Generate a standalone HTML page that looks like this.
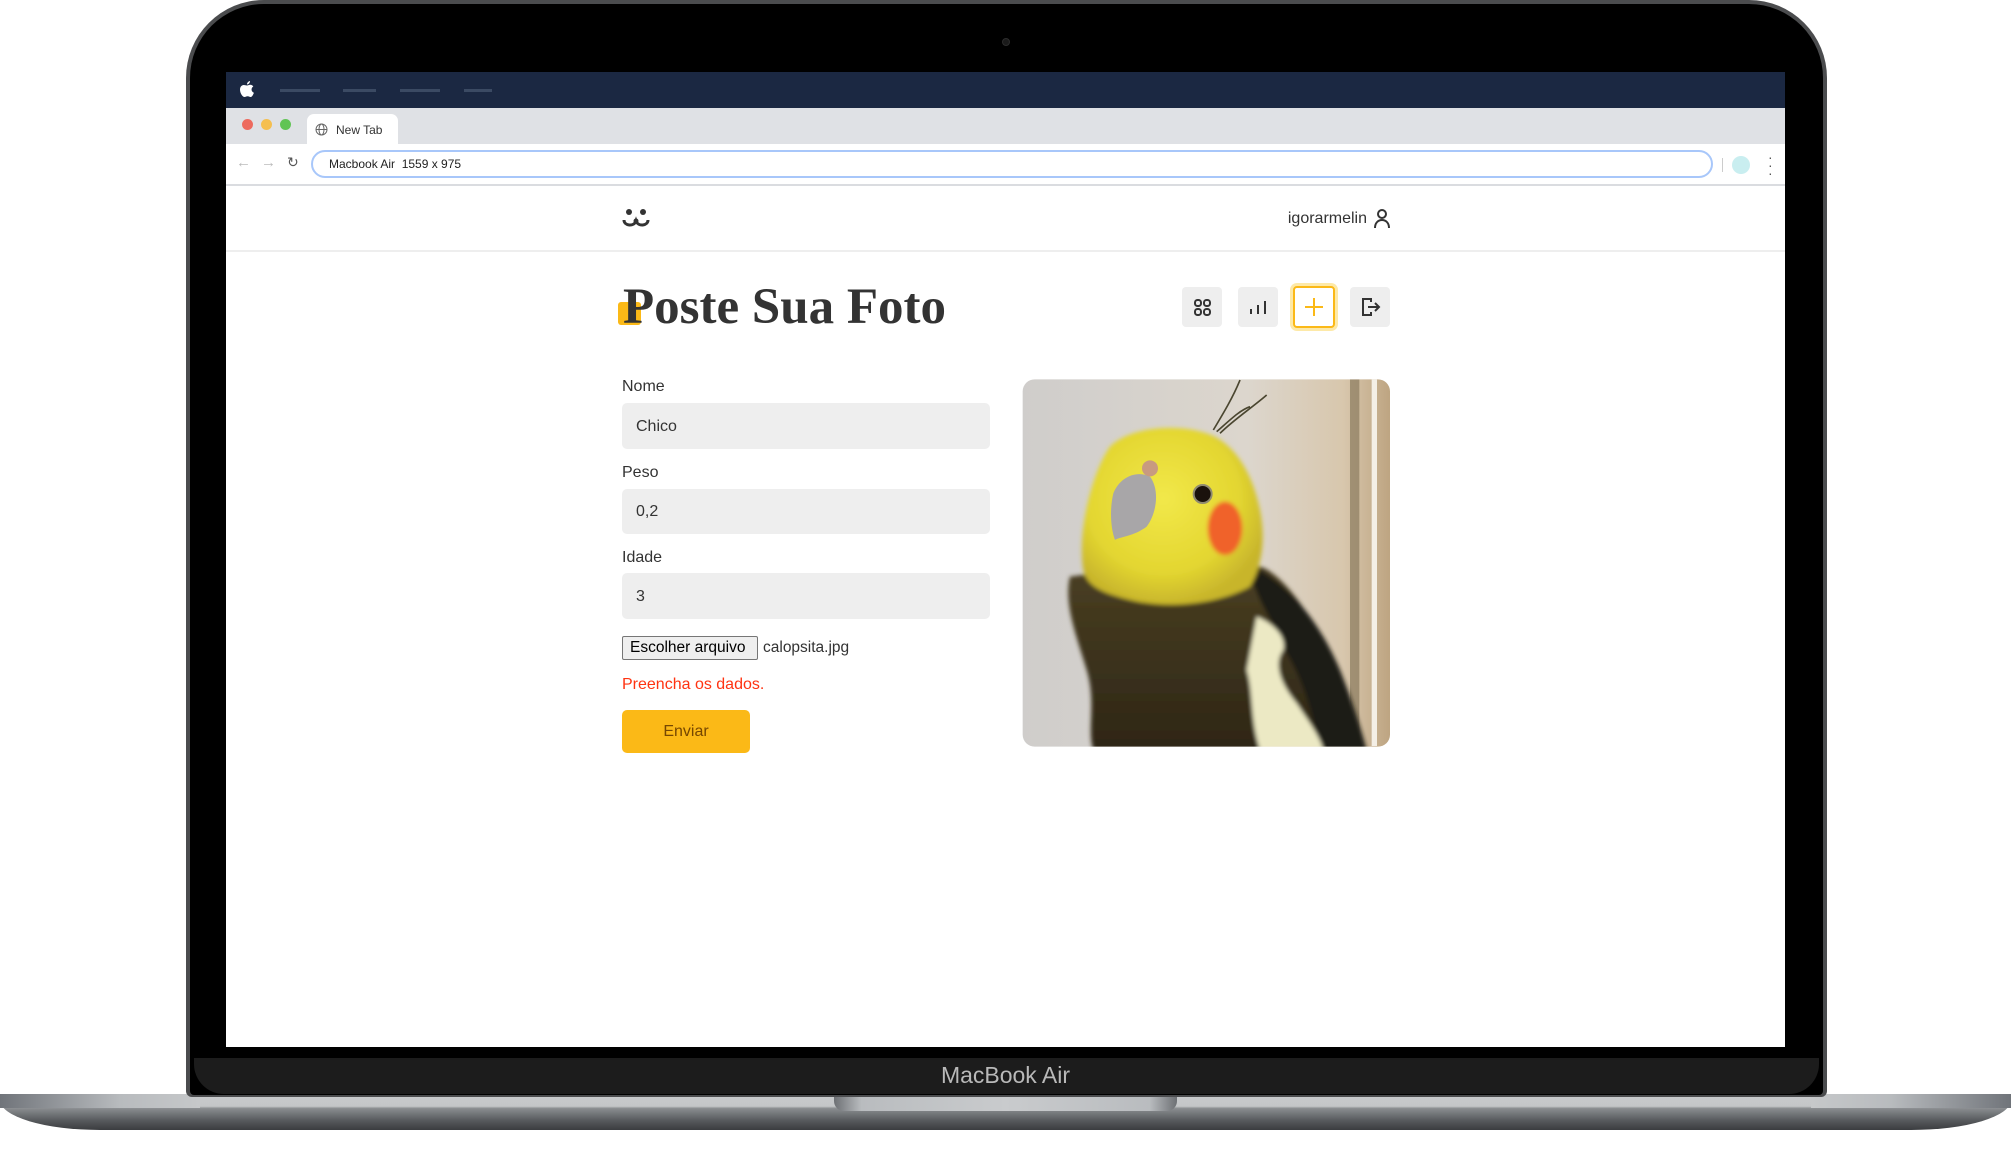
<!DOCTYPE html>
<html><head><meta charset="utf-8"><style>
*{margin:0;padding:0;box-sizing:border-box}
body{width:2011px;height:1165px;background:#fff;position:relative;overflow:hidden;font-family:"Liberation Sans",Arial,sans-serif}
.abs{position:absolute}
</style></head><body>
<div class="abs" style="left:0;top:1094px;width:2011px;height:36px;background:linear-gradient(#c9cbcd 0,#c4c6c8 34%,#8a8d90 40%,#55585b 75%,#3a3c3f 100%);border-radius:0 0 100px 100px/0 0 30px 30px"></div>
<div class="abs" style="left:0;top:1094px;width:200px;height:14px;background:linear-gradient(90deg,#70747a,#b8bbbe 60%,#c6c8ca)"></div>
<div class="abs" style="left:1811px;top:1094px;width:200px;height:14px;background:linear-gradient(270deg,#70747a,#b8bbbe 60%,#c6c8ca)"></div>
<div class="abs" style="left:834px;top:1094px;width:343px;height:17px;background:linear-gradient(90deg,#6d7074,#b9bcbf 8%,#c9cbcd 50%,#b9bcbf 92%,#6d7074);border-radius:0 0 10px 10px"></div>
<div class="abs" style="left:186px;top:0;width:1641px;height:1097px;background:#4b4c4e;border-radius:78px 78px 6px 6px"></div>
<div class="abs" style="left:190px;top:4px;width:1633px;height:1091px;background:#000;border-radius:74px 74px 4px 4px"></div>
<div class="abs" style="left:194px;top:1058px;width:1625px;height:36px;background:#1c1c1c;border-radius:0 0 30px 30px"></div>
<div class="abs" style="left:0;top:1062px;width:2011px;text-align:center;color:#b9b9b9;font-size:23px">MacBook Air</div>
<div class="abs" style="left:1002px;top:38px;width:8px;height:8px;border-radius:50%;background:#1a1a1a;border:1px solid #2c2c2c"></div>
<div class="abs" style="left:226px;top:72px;width:1559px;height:975px;background:#fff;overflow:hidden">
  <div class="abs" style="left:0;top:0;width:1559px;height:36px;background:#1b2842">
    <svg class="abs" style="left:14px;top:9px" width="14" height="17" viewBox="0 0 14 17"><path d="M10 0c0 2-1.5 3.5-3 3.5C7 1.6 8.5.2 10 0zM7 4.5c1 0 2-.8 3.2-.8 1.3 0 2.5.7 3.1 1.8-2.6 1.5-2.2 5.2.6 6.2-.6 1.8-1.9 4.3-3.3 4.3-1.2 0-1.5-.7-3-.7s-1.9.7-3 .7C2.5 16 0 12 0 8.6 0 5.8 1.8 4 3.7 4 5 4 6 4.5 7 4.5z" fill="#fff"/></svg>
    <div class="abs" style="left:54px;top:17px;width:40px;height:3px;background:#3b4a63"></div>
    <div class="abs" style="left:117px;top:17px;width:33px;height:3px;background:#3b4a63"></div>
    <div class="abs" style="left:174px;top:17px;width:40px;height:3px;background:#3b4a63"></div>
    <div class="abs" style="left:238px;top:17px;width:28px;height:3px;background:#3b4a63"></div>
  </div>
  <div class="abs" style="left:0;top:36px;width:1559px;height:36px;background:#dfe1e5">
    <div class="abs" style="left:16px;top:11px;width:11px;height:11px;border-radius:50%;background:#ed6a5e"></div>
    <div class="abs" style="left:35px;top:11px;width:11px;height:11px;border-radius:50%;background:#f5bf4f"></div>
    <div class="abs" style="left:54px;top:11px;width:11px;height:11px;border-radius:50%;background:#61c454"></div>
    <div class="abs" style="left:81px;top:6px;width:91px;height:30px;background:#fff;border-radius:7px 7px 0 0">
      <svg class="abs" style="left:8px;top:9px" width="13" height="13" viewBox="0 0 13 13" fill="none" stroke="#666" stroke-width="1"><circle cx="6.5" cy="6.5" r="5.5"/><ellipse cx="6.5" cy="6.5" rx="2.5" ry="5.5"/><path d="M1 6.5h11"/></svg>
      <div class="abs" style="left:29px;top:9px;font-size:12px;color:#333">New Tab</div>
    </div>
  </div>
  <div class="abs" style="left:0;top:72px;width:1559px;height:42px;background:#fff;border-bottom:2px solid #dadce0">
    <div class="abs" style="left:10px;top:10px;font-size:15px;color:#bbb">←</div>
    <div class="abs" style="left:35px;top:10px;font-size:15px;color:#bbb">→</div>
    <div class="abs" style="left:61px;top:10px;font-size:14px;color:#555">↻</div>
    <div class="abs" style="left:85px;top:6px;width:1402px;height:28px;border:2px solid #a8c7fa;border-radius:14px"></div>
    <div class="abs" style="left:103px;top:13px;font-size:12px;color:#222">Macbook Air&nbsp;&nbsp;1559 x 975</div>
    <div class="abs" style="left:1496px;top:14px;width:1px;height:14px;background:#ccc"></div>
    <div class="abs" style="left:1506px;top:12px;width:18px;height:18px;border-radius:50%;background:#c9eef0"></div>
    <div class="abs" style="left:1542px;top:9px;font-size:14px;color:#555;line-height:8px">·<br>·<br>·</div>
  </div>
  <div class="abs" style="left:0;top:178px;width:1559px;height:2px;background:#eee"></div>
  <svg class="abs" style="left:396px;top:132px" width="28" height="28" viewBox="0 0 28 28"><circle cx="7" cy="8" r="3" fill="#333"/><circle cx="21" cy="8" r="3" fill="#333"/><path d="M2 16c0 6 10 7 12 1c2 6 12 5 12-1" fill="none" stroke="#333" stroke-width="3"/><circle cx="14" cy="17" r="2.5" fill="#333"/></svg>
  <div class="abs" style="left:1061px;top:138px;font-size:16px;color:#333;text-align:right;width:80px">igorarmelin</div>
  <svg class="abs" style="left:1147px;top:137px" width="18" height="20" viewBox="0 0 18 20" fill="none" stroke="#333" stroke-width="2"><circle cx="9" cy="5" r="4"/><path d="M2 19c0-5 3-8 7-8s7 3 7 8"/></svg>
  <div class="abs" style="left:392px;top:230px;width:23px;height:23px;background:#fbb917;border-radius:3px"></div>
  <div class="abs" style="left:397px;top:210px;font-family:'Liberation Serif',serif;font-weight:bold;font-size:51px;color:#333;line-height:1">Poste Sua Foto</div>
  <div class="abs" style="left:956px;top:215px;width:40px;height:40px;background:#eee;border-radius:4px"><svg width="40" height="40" viewBox="0 0 40 40" fill="none" stroke="#333" stroke-width="2"><rect x="13" y="13" width="6" height="6" rx="2.5"/><rect x="22" y="13" width="6" height="6" rx="2.5"/><rect x="13" y="22" width="6" height="6" rx="2.5"/><rect x="22" y="22" width="6" height="6" rx="2.5"/></svg></div>
  <div class="abs" style="left:1012px;top:215px;width:40px;height:40px;background:#eee;border-radius:4px"><svg width="40" height="40" viewBox="0 0 40 40" fill="none" stroke="#333" stroke-width="2"><path d="M13 27v-5M20 27v-9M27 27v-13"/></svg></div>
  <div class="abs" style="left:1067px;top:214px;width:42px;height:42px;background:#fff;border:2px solid #fbb917;border-radius:4px;box-shadow:0 0 0 3px #fde9a8"><svg width="38" height="38" viewBox="0 0 38 38" fill="none" stroke="#fbb917" stroke-width="2"><path d="M19 10v18M10 19h18"/></svg></div>
  <div class="abs" style="left:1124px;top:215px;width:40px;height:40px;background:#eee;border-radius:4px"><svg width="40" height="40" viewBox="0 0 40 40" fill="none" stroke="#333" stroke-width="2"><path d="M21 15v-3h-8v16h8v-3M18 20h11M25 16l4 4-4 4"/></svg></div>
  <div class="abs" style="left:396px;top:306px;font-size:16px;color:#333">Nome</div>
  <div class="abs" style="left:396px;top:331px;width:368px;height:46px;background:#eee;border-radius:5px;font-size:16px;color:#333;padding:15px 14px">Chico</div>
  <div class="abs" style="left:396px;top:392px;font-size:16px;color:#333">Peso</div>
  <div class="abs" style="left:396px;top:417px;width:368px;height:45px;background:#eee;border-radius:5px;font-size:16px;color:#333;padding:14px 14px">0,2</div>
  <div class="abs" style="left:396px;top:477px;font-size:16px;color:#333">Idade</div>
  <div class="abs" style="left:396px;top:501px;width:368px;height:46px;background:#eee;border-radius:5px;font-size:16px;color:#333;padding:15px 14px">3</div>
  <div class="abs" style="left:396px;top:564px;width:136px;height:24px;background:#efefef;border:1px solid #767676;border-radius:2px;font-size:15.5px;color:#000;padding:2px 0 0 7px">Escolher arquivo</div>
  <div class="abs" style="left:537px;top:567px;font-size:15.5px;color:#333">calopsita.jpg</div>
  <div class="abs" style="left:396px;top:604px;font-size:16px;color:#f31">Preencha os dados.</div>
  <div class="abs" style="left:396px;top:638px;width:128px;height:43px;background:#fbb917;border-radius:5px;font-size:16px;color:#764701;text-align:center;line-height:44px">Enviar</div>
  <svg class="abs" style="left:794px;top:298px" width="380" height="385" viewBox="0 0 1140 1155">
    <defs>
      <clipPath id="c"><rect x="8" y="28" width="1102" height="1102" rx="36"/></clipPath>
      <linearGradient id="bg" x1="0" x2="1"><stop offset="0" stop-color="#cfcdcb"/><stop offset=".6" stop-color="#dcd6cd"/><stop offset=".85" stop-color="#d8c7ad"/><stop offset="1" stop-color="#b89d78"/></linearGradient>
      <radialGradient id="hy" cx=".45" cy=".4" r=".6"><stop offset="0" stop-color="#f2e84a"/><stop offset=".7" stop-color="#e3d630"/><stop offset="1" stop-color="#c8b52c"/></radialGradient>
      <linearGradient id="bd" x1="0" y1="0" x2="0" y2="1"><stop offset="0" stop-color="#4a3f22"/><stop offset="1" stop-color="#2e2616"/></linearGradient>
      <filter id="b"><feGaussianBlur stdDeviation="6"/></filter>
    </defs>
    <g clip-path="url(#c)">
      <rect width="1140" height="1155" fill="url(#bg)"/>
      <rect x="990" y="28" width="28" height="1100" fill="#8a7a5e" opacity=".7"/>
      <rect x="1055" y="28" width="16" height="1100" fill="#f4efe6"/>
      <g filter="url(#b)">
        <path d="M150 620C130 700 170 800 200 900 230 1000 200 1080 220 1140H1040C1000 1000 960 880 880 760 820 660 760 600 720 590L300 600Z" fill="url(#bd)"/>
        <path d="M720 600C820 660 900 760 960 900 1000 1000 1030 1100 1040 1140H900C880 1050 860 950 800 850 760 760 720 700 700 640Z" fill="#1f1a12"/>
        <path d="M710 740C760 760 800 800 790 840 760 880 780 940 830 1000 870 1060 900 1100 910 1140H720C690 1050 700 960 680 900Z" fill="#ece9c4"/>
        <path d="M190 600C170 480 220 300 270 230 330 170 470 160 560 190 650 220 700 320 720 420 740 520 720 600 690 650 600 700 450 720 330 690 250 670 200 650 190 600Z" fill="url(#hy)"/>
        <ellipse cx="615" cy="475" rx="52" ry="80" fill="#f0622a"/>
      </g>
      <path d="M280 370C300 320 350 300 390 320 420 360 410 430 380 470 340 500 300 500 285 510 270 470 270 410 280 370Z" fill="#a8a6a8"/>
      <circle cx="390" cy="295" r="24" fill="#c89a80"/>
      <circle cx="548" cy="372" r="27" fill="#1a120c" stroke="#8f8a70" stroke-width="6"/>
      <path d="M580 180C610 130 640 80 660 30M600 190C640 150 700 110 740 75M590 185C630 150 660 120 690 110" stroke="#4a4630" stroke-width="5" fill="none"/>
    </g>
  </svg>
</div>
</body></html>
